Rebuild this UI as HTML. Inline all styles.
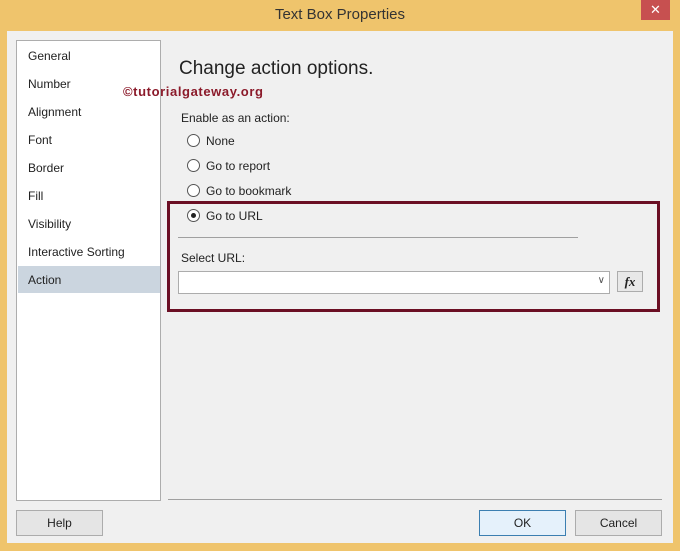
<!DOCTYPE html>
<html><head><style>
*{margin:0;padding:0;box-sizing:border-box}
body{width:680px;height:551px;background:#efc46c;font-family:"Liberation Sans",sans-serif;font-size:12px;color:#222;position:relative;overflow:hidden}
.abs{position:absolute}
.title{left:0;top:6px;width:680px;text-align:center;font-size:15px;color:#333}
.close{left:641px;top:0;width:29px;height:20px;background:#c75050;color:#fff;text-align:center;font-size:13px;line-height:20px}
.content{left:7px;top:31px;width:666px;height:512px;background:#f0f0f0}
.left{left:16px;top:40px;width:145px;height:461px;background:#fff;border:1px solid #adadad}
.item{position:absolute;left:11px;font-size:12px;color:#222}
.sel{position:absolute;left:1px;top:225px;width:142px;height:27px;background:#cbd5df}
.radio{position:absolute;width:13px;height:13px;border:1px solid #555;border-radius:50%;background:#fff}
.btn{position:absolute;height:26px;border:1px solid #acacac;background:#e5e5e5;text-align:center;line-height:24px;font-size:12px}
</style></head><body>
<div class="abs title">Text Box Properties</div>
<div class="abs close">✕</div>
<div class="abs content"></div>
<div class="abs left">
<div class="sel"></div>
<div class="item" style="top:8px">General</div>
<div class="item" style="top:36px">Number</div>
<div class="item" style="top:64px">Alignment</div>
<div class="item" style="top:92px">Font</div>
<div class="item" style="top:120px">Border</div>
<div class="item" style="top:148px">Fill</div>
<div class="item" style="top:176px">Visibility</div>
<div class="item" style="top:204px">Interactive Sorting</div>
<div class="item" style="top:232px">Action</div>
</div>
<div class="abs" style="left:179px;top:58px;font-size:19px;color:#222">Change action options.</div>
<div class="abs" style="left:123px;top:84px;font-size:13px;font-weight:bold;color:#8b1a2a;letter-spacing:0.6px">©tutorialgateway.org</div>
<div class="abs" style="left:181px;top:111px">Enable as an action:</div>
<div class="radio" style="left:187px;top:134px"></div><div class="abs" style="left:206px;top:134px">None</div>
<div class="radio" style="left:187px;top:159px"></div><div class="abs" style="left:206px;top:159px">Go to report</div>
<div class="radio" style="left:187px;top:184px"></div><div class="abs" style="left:206px;top:184px">Go to bookmark</div>
<div class="radio" style="left:187px;top:209px"><div style="position:absolute;left:3px;top:3px;width:5px;height:5px;border-radius:50%;background:#222"></div></div><div class="abs" style="left:206px;top:209px">Go to URL</div>
<div class="abs" style="left:178px;top:237px;width:400px;height:1px;background:#a0a0a0"></div>
<div class="abs" style="left:181px;top:251px">Select URL:</div>
<div class="abs" style="left:178px;top:271px;width:432px;height:23px;background:#fff;border:1px solid #acacac"><span style="position:absolute;right:4px;top:3px;font-size:10px;color:#555">∨</span></div>
<div class="abs" style="left:617px;top:271px;width:26px;height:21px;background:#e8e8e8;border:1px solid #acacac;text-align:center;font-family:'Liberation Serif',serif;font-style:italic;font-weight:bold;font-size:13px;line-height:19px">fx</div>
<div class="abs" style="left:167px;top:201px;width:493px;height:111px;border:3px solid #6b0f24"></div>
<div class="abs" style="left:168px;top:499px;width:494px;height:1px;background:#a0a0a0"></div>
<div class="btn" style="left:16px;top:510px;width:87px">Help</div>
<div class="btn" style="left:479px;top:510px;width:87px;border-color:#3c7fb1;background:#e5f1fb">OK</div>
<div class="btn" style="left:575px;top:510px;width:87px">Cancel</div>
</body></html>
